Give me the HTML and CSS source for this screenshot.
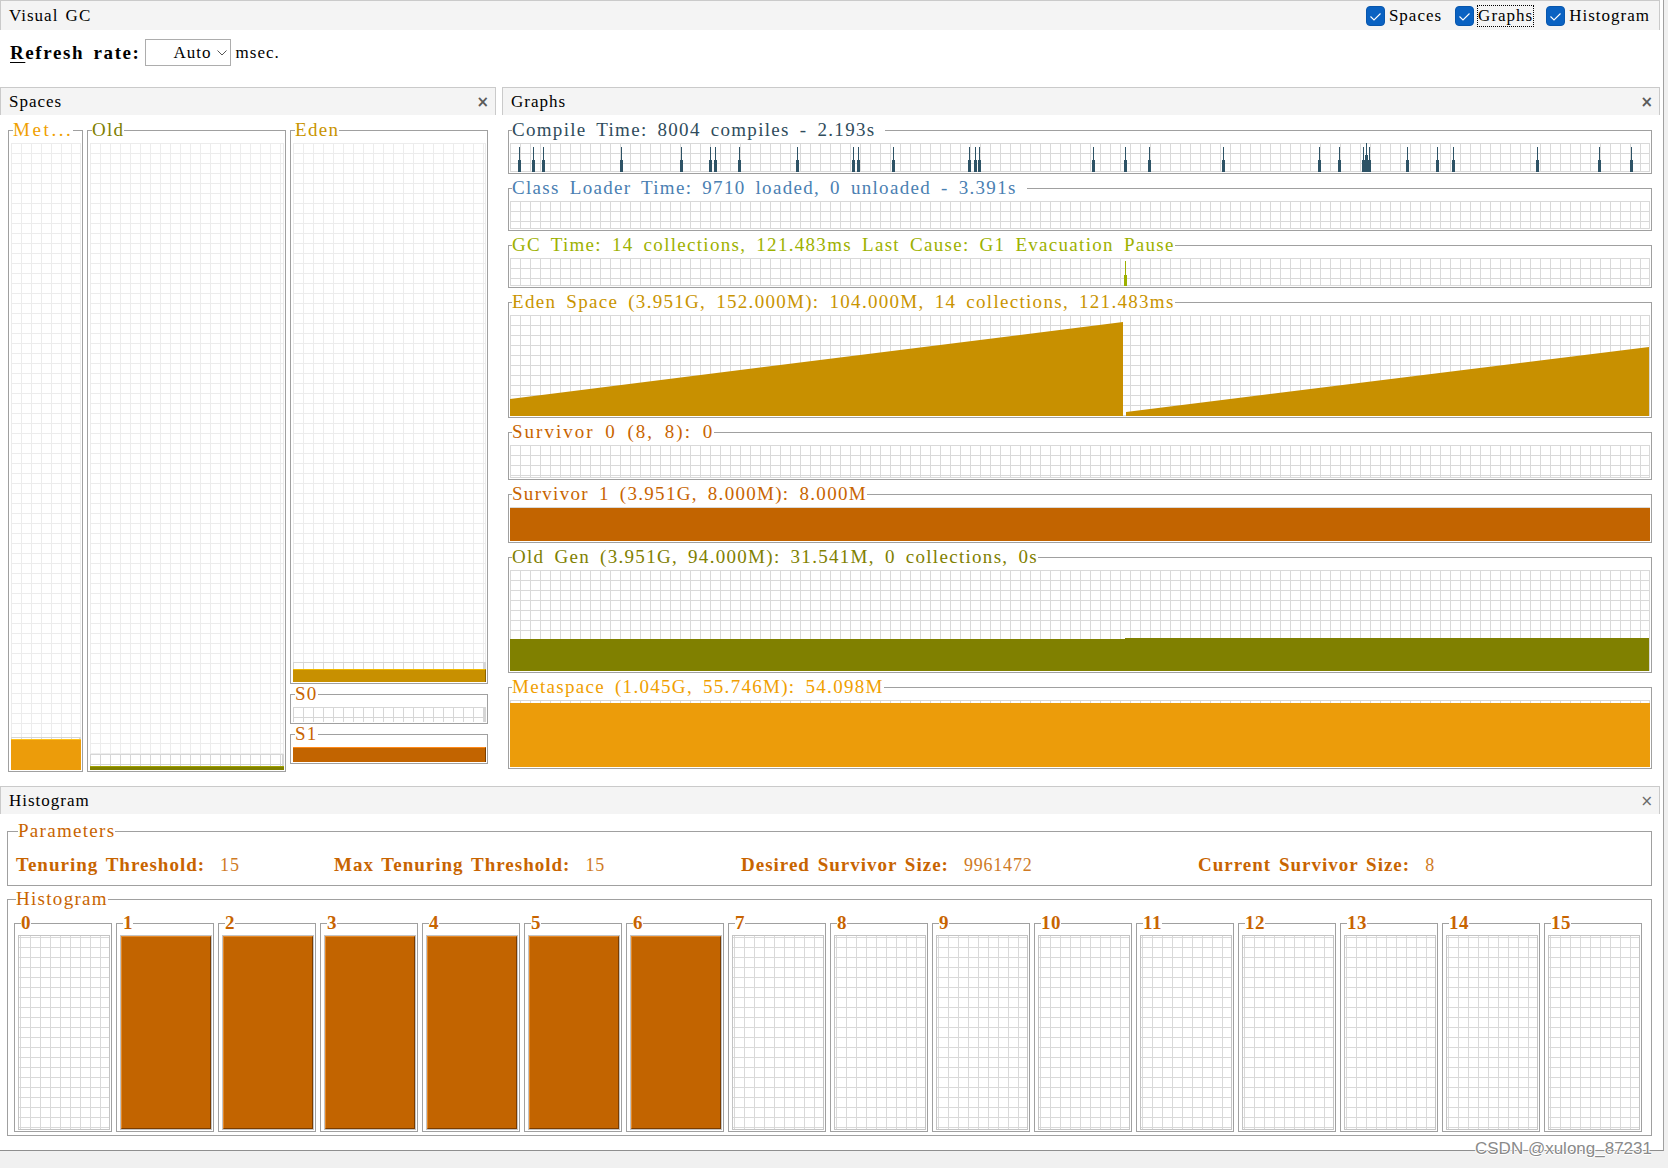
FILE: index.html
```html
<!DOCTYPE html>
<html>
<head>
<meta charset="utf-8">
<title>Visual GC</title>
<link rel="stylesheet" href="styles.css">
</head>
<body>
<div class="page">
  <div class="frame">
    <div class="titlebar">
      <span class="ui">Visual GC</span>
      <div class="checks">
        <span class="chk"><svg class="cb" width="19" height="20" viewBox="0 0 19 20"><rect x="0.5" y="0.5" width="18" height="19" rx="3.5" fill="#0a62c2" stroke="#0857ad"/><path d="M4.5 10.5 L8 14 L14.5 7.5" fill="none" stroke="#fff" stroke-width="1.1"/></svg><span class="ui">Spaces</span></span>
        <span class="chk"><svg class="cb" width="19" height="20" viewBox="0 0 19 20"><rect x="0.5" y="0.5" width="18" height="19" rx="3.5" fill="#0a62c2" stroke="#0857ad"/><path d="M4.5 10.5 L8 14 L14.5 7.5" fill="none" stroke="#fff" stroke-width="1.1"/></svg><span class="ui focus">Graphs</span></span>
        <span class="chk"><svg class="cb" width="19" height="20" viewBox="0 0 19 20"><rect x="0.5" y="0.5" width="18" height="19" rx="3.5" fill="#0a62c2" stroke="#0857ad"/><path d="M4.5 10.5 L8 14 L14.5 7.5" fill="none" stroke="#fff" stroke-width="1.1"/></svg><span class="ui">Histogram</span></span>
      </div>
    </div>

    <div class="refresh">
      <span class="rlabel"><u>R</u>efresh rate:</span>
      <span class="combo"><span class="ui">Auto</span><svg class="chev" width="10" height="6" viewBox="0 0 10 6"><path d="M0.5 0.5 L5 5 L9.5 0.5" fill="none" stroke="#555" stroke-width="1"/></svg></span>
      <span class="ui msec">msec.</span>
    </div>

    <div class="panels">
      <section class="panel spaces">
        <div class="phead"><span class="ui">Spaces</span><span class="close">×</span></div>
        <div class="spaces-body">
          <fieldset class="tb sp sp-met">
            <legend class="c-met dots">Met...</legend>
            <div class="spchart tall">
              <div class="lt"></div>
              <div class="dk" style="height:2px"></div>
              <div class="sbar b-met" style="height:31px"></div>
            </div>
          </fieldset>
          <fieldset class="tb sp sp-old">
            <legend class="c-old">Old</legend>
            <div class="spchart tall">
              <div class="lt"></div>
              <div class="dk" style="height:12px"></div>
              <div class="sbar b-old" style="height:4px"></div>
            </div>
          </fieldset>
          <div class="edencol">
            <fieldset class="tb sp">
              <legend class="c-eden">Eden</legend>
              <div class="spchart eden">
                <div class="lt"></div>
                <div class="dk" style="height:7px"></div>
                <div class="sbar b-eden" style="height:13px"></div>
              </div>
            </fieldset>
            <fieldset class="tb sp s0">
              <legend class="c-surv">S0</legend>
              <div class="spchart small"><div class="dk fill"></div></div>
            </fieldset>
            <fieldset class="tb sp s1">
              <legend class="c-surv">S1</legend>
              <div class="spchart small"><div class="sbar b-surv fill"></div></div>
            </fieldset>
          </div>
        </div>
      </section>

      <section class="panel graphs">
        <div class="phead"><span class="ui">Graphs</span><span class="close">×</span></div>
        <div class="graphs-body">
          <fieldset class="tb gr">
            <legend class="c-compile">Compile Time: 8004 compiles - 2.193s&nbsp;</legend>
            <div class="gchart h29">
              <svg class="plot" viewBox="0 0 1140 29" preserveAspectRatio="none">
                <g fill="#2e5366">
                  <rect x="8" y="17" width="3" height="12"/><rect x="9" y="4" width="1" height="25"/>
                  <rect x="22" y="17" width="3" height="12"/><rect x="23" y="4" width="1" height="25"/>
                  <rect x="32" y="17" width="3" height="12"/><rect x="33" y="4" width="1" height="25"/>
                  <rect x="110" y="17" width="3" height="12"/><rect x="111" y="4" width="1" height="25"/>
                  <rect x="170" y="17" width="3" height="12"/><rect x="171" y="4" width="1" height="25"/>
                  <rect x="199" y="17" width="3" height="12"/><rect x="200" y="4" width="1" height="25"/>
                  <rect x="204" y="17" width="3" height="12"/><rect x="205" y="4" width="1" height="25"/>
                  <rect x="228" y="17" width="3" height="12"/><rect x="229" y="4" width="1" height="25"/>
                  <rect x="286" y="17" width="3" height="12"/><rect x="287" y="4" width="1" height="25"/>
                  <rect x="342" y="17" width="3" height="12"/><rect x="343" y="4" width="1" height="25"/>
                  <rect x="347" y="17" width="3" height="12"/><rect x="348" y="4" width="1" height="25"/>
                  <rect x="382" y="17" width="3" height="12"/><rect x="383" y="4" width="1" height="25"/>
                  <rect x="458" y="17" width="3" height="12"/><rect x="459" y="4" width="1" height="25"/>
                  <rect x="464" y="17" width="3" height="12"/><rect x="465" y="4" width="1" height="25"/>
                  <rect x="468" y="17" width="3" height="12"/><rect x="469" y="4" width="1" height="25"/>
                  <rect x="582" y="17" width="3" height="12"/><rect x="583" y="4" width="1" height="25"/>
                  <rect x="614" y="17" width="3" height="12"/><rect x="615" y="4" width="1" height="25"/>
                  <rect x="638" y="17" width="3" height="12"/><rect x="639" y="4" width="1" height="25"/>
                  <rect x="712" y="17" width="3" height="12"/><rect x="713" y="4" width="1" height="25"/>
                  <rect x="808" y="17" width="3" height="12"/><rect x="809" y="4" width="1" height="25"/>
                  <rect x="828" y="17" width="3" height="12"/><rect x="829" y="4" width="1" height="25"/>
                  <rect x="852" y="17" width="3" height="12"/><rect x="853" y="4" width="1" height="25"/>
                  <rect x="855" y="12" width="3" height="17"/><rect x="856" y="0" width="1" height="29"/>
                  <rect x="858" y="17" width="3" height="12"/><rect x="859" y="4" width="1" height="25"/>
                  <rect x="896" y="17" width="3" height="12"/><rect x="897" y="4" width="1" height="25"/>
                  <rect x="926" y="17" width="3" height="12"/><rect x="927" y="4" width="1" height="25"/>
                  <rect x="942" y="17" width="3" height="12"/><rect x="943" y="4" width="1" height="25"/>
                  <rect x="1026" y="17" width="3" height="12"/><rect x="1027" y="4" width="1" height="25"/>
                  <rect x="1088" y="17" width="3" height="12"/><rect x="1089" y="4" width="1" height="25"/>
                  <rect x="1120" y="17" width="3" height="12"/><rect x="1121" y="4" width="1" height="25"/>
                </g>
              </svg>
            </div>
          </fieldset>
          <fieldset class="tb gr">
            <legend class="c-class">Class Loader Time: 9710 loaded, 0 unloaded - 3.391s&nbsp;</legend>
            <div class="gchart h28"></div>
          </fieldset>
          <fieldset class="tb gr">
            <legend class="c-gc">GC Time: 14 collections, 121.483ms Last Cause: G1 Evacuation Pause</legend>
            <div class="gchart h28">
              <svg class="plot" viewBox="0 0 1140 28" preserveAspectRatio="none">
                <g fill="#9cb000"><rect x="614" y="17" width="3" height="11"/><rect x="615" y="3" width="1" height="25"/></g>
              </svg>
            </div>
          </fieldset>
          <fieldset class="tb gr">
            <legend class="c-eden">Eden Space (3.951G, 152.000M): 104.000M, 14 collections, 121.483ms</legend>
            <div class="gchart h101">
              <svg class="plot" viewBox="0 0 1140 101" preserveAspectRatio="none">
                <path d="M0 101 V84 L613 7 V101 Z M616 101 V97 L1139 32 V101 Z" fill="#c89000"/>
              </svg>
            </div>
          </fieldset>
          <fieldset class="tb gr">
            <legend class="c-surv wide">Survivor 0 (8, 8): 0</legend>
            <div class="gchart h33"></div>
          </fieldset>
          <fieldset class="tb gr">
            <legend class="c-surv">Survivor 1 (3.951G, 8.000M): 8.000M</legend>
            <div class="gchart h34 stack"><div class="gbar g-surv" style="height:33px"></div></div>
          </fieldset>
          <fieldset class="tb gr">
            <legend class="c-old">Old Gen (3.951G, 94.000M): 31.541M, 0 collections, 0s</legend>
            <div class="gchart h101">
              <svg class="plot" viewBox="0 0 1140 101" preserveAspectRatio="none">
                <path d="M0 101 V69 H615 V68 H1139 V101 Z" fill="#808000"/>
              </svg>
            </div>
          </fieldset>
          <fieldset class="tb gr">
            <legend class="c-met">Metaspace (1.045G, 55.746M): 54.098M</legend>
            <div class="gchart h67 stack"><div class="gbar g-met" style="height:64px"></div></div>
          </fieldset>
        </div>
      </section>
    </div>

    <section class="panel hist">
      <div class="phead"><span class="ui">Histogram</span><span class="close light">×</span></div>
      <div class="hist-body">
        <fieldset class="tb params">
          <legend class="c-surv">Parameters</legend>
          <div class="prow">
            <div class="pg"><span class="pl">Tenuring Threshold:</span><span class="pv">15</span></div>
            <div class="pg"><span class="pl">Max Tenuring Threshold:</span><span class="pv">15</span></div>
            <div class="pg"><span class="pl">Desired Survivor Size:</span><span class="pv">9961472</span></div>
            <div class="pg"><span class="pl">Current Survivor Size:</span><span class="pv">8</span></div>
          </div>
        </fieldset>
        <fieldset class="tb histo">
          <legend class="c-surv">Histogram</legend>
          <div class="cells">
            <fieldset class="tb cell"><legend>0</legend><div class="cchart"></div></fieldset>
            <fieldset class="tb cell"><legend>1</legend><div class="cchart"><div class="cbar"></div></div></fieldset>
            <fieldset class="tb cell"><legend>2</legend><div class="cchart"><div class="cbar"></div></div></fieldset>
            <fieldset class="tb cell"><legend>3</legend><div class="cchart"><div class="cbar"></div></div></fieldset>
            <fieldset class="tb cell"><legend>4</legend><div class="cchart"><div class="cbar"></div></div></fieldset>
            <fieldset class="tb cell"><legend>5</legend><div class="cchart"><div class="cbar"></div></div></fieldset>
            <fieldset class="tb cell"><legend>6</legend><div class="cchart"><div class="cbar"></div></div></fieldset>
            <fieldset class="tb cell"><legend>7</legend><div class="cchart"></div></fieldset>
            <fieldset class="tb cell"><legend>8</legend><div class="cchart"></div></fieldset>
            <fieldset class="tb cell"><legend>9</legend><div class="cchart"></div></fieldset>
            <fieldset class="tb cell"><legend>10</legend><div class="cchart"></div></fieldset>
            <fieldset class="tb cell"><legend>11</legend><div class="cchart"></div></fieldset>
            <fieldset class="tb cell"><legend>12</legend><div class="cchart"></div></fieldset>
            <fieldset class="tb cell"><legend>13</legend><div class="cchart"></div></fieldset>
            <fieldset class="tb cell"><legend>14</legend><div class="cchart"></div></fieldset>
            <fieldset class="tb cell"><legend>15</legend><div class="cchart"></div></fieldset>
          </div>
        </fieldset>
      </div>
    </section>
  </div>
  <div class="watermark">CSDN @xulong_87231</div>
</div>
</body>
</html>
```

FILE: styles.css
```css
* { box-sizing: border-box; }
html, body { margin: 0; padding: 0; }
body {
  background: #f0f0f0;
  width: 1668px;
  height: 1168px;
  overflow: hidden;
  font-family: "Liberation Serif", "Noto Sans CJK SC", serif;
  color: #000;
}
.page { position: relative; width: 1668px; height: 1168px; }
.frame {
  width: 1664px;
  height: 1151px;
  background: #fff;
  border-right: 1px solid #a0a0a0;
  border-bottom: 1px solid #8e8e8e;
  display: flex;
  flex-direction: column;
}
.ui { font-size: 17px; letter-spacing: 1px; word-spacing: 2px; line-height: 20px; white-space: nowrap; }

/* title bar */
.titlebar {
  width: 1660px;
  height: 30px;
  flex: none;
  background: #f4f4f4;
  border: 1px solid #cacaca;
  border-bottom: 0;
  display: flex;
  align-items: center;
  justify-content: space-between;
  padding: 0 9px 0 8px;
}
.checks { display: flex; align-items: center; gap: 13px; }
.chk { display: flex; align-items: center; gap: 4px; }
.cb { display: block; }
.focus { outline: 1px dotted #000; outline-offset: 0; }

/* refresh row */
.refresh {
  height: 57px;
  flex: none;
  display: flex;
  align-items: center;
  padding: 0 0 12px 10px;
}
.rlabel { font-size: 19px; font-weight: bold; letter-spacing: 1.6px; word-spacing: 3px; line-height: 20px; white-space: nowrap; }
.rlabel u { text-decoration-thickness: 1px; text-underline-offset: 3px; }
.combo {
  margin-left: 4px;
  width: 86px;
  height: 27px;
  border: 1px solid #adadad;
  background: #fff;
  display: flex;
  align-items: center;
  justify-content: flex-end;
  gap: 5px;
  padding-right: 3px;
}
.chev { display: block; }
.msec { margin-left: 5px; }

/* panels */
.panels { height: 699px; flex: none; display: flex; gap: 6px; }
.panel { display: flex; flex-direction: column; }
.spaces { width: 496px; }
.graphs { width: 1158px; }
.hist { width: 1660px; flex: 1; }
.phead {
  height: 28px;
  flex: none;
  background: #f4f4f4;
  border: 1px solid #cacaca;
  border-bottom: 0;
  display: flex;
  align-items: center;
  justify-content: space-between;
  padding: 0 6px 0 8px;
}
.close { font-family: "DejaVu Sans", sans-serif; font-size: 15px; font-weight: bold; color: #5a5a5a; line-height: 16px; }
.close.light { font-weight: normal; color: #6a6a6a; }

/* titled borders */
fieldset.tb {
  margin: 0;
  min-width: 0;
  border: 1px solid #a0a0a0;
  padding: 3px 1px 1px 2px;
}
fieldset.tb > legend {
  padding: 0;
  margin-left: 2px;
  font-size: 19px;
  line-height: 20px;
  height: 20px;
  letter-spacing: 1.3px;
  word-spacing: 4px;
  white-space: nowrap;
}
fieldset.tb > legend.dots { letter-spacing: 2.6px; }
fieldset.tb > legend.wide { letter-spacing: 2px; }
.c-met { color: #f0a000; }
.c-old { color: #808000; }
.c-eden { color: #c99400; }
.c-surv { color: #c86400; }
.c-compile { color: #2f4c5c; }
.c-class { color: #4a80b2; }
.c-gc { color: #9db100; }

/* spaces */
.spaces-body { display: flex; gap: 4px; padding: 5px 8px 0 8px; align-items: flex-start; }
.sp-met { width: 75px; }
.sp-old { width: 199px; }
.edencol { width: 198px; display: flex; flex-direction: column; }
.s0 { margin-top: 4px; padding-top: 2px; }
.s1 { margin-top: 3px; padding-top: 4px; }
.spchart { display: flex; flex-direction: column; }
.spchart.tall { height: 627px; }
.spchart.eden { height: 539px; }
.spchart.small { height: 15px; }
.lt {
  flex: 1;
  background-color: #fff;
  background-image: linear-gradient(90deg, #ececec 1px, transparent 1px), linear-gradient(180deg, #ececec 1px, transparent 1px);
  background-size: 10px 10px;
  box-shadow: inset -1px 0 #ececec;
}
.dk {
  flex: none;
  background-color: #fff;
  background-image: linear-gradient(90deg, #d6d6d6 1px, transparent 1px), linear-gradient(180deg, #d6d6d6 1px, transparent 1px);
  background-size: 10px 10px;
  box-shadow: inset -2px 0 #d6d6d6;
}
.sbar { flex: none; }
.spchart .fill { flex: 1 1 auto; }
.b-met { background: #ec9c0a; border-top: 1px solid #ffc21a; }
.b-old { background: #808000; border-top: 1px solid #a0a000; }
.b-eden { background: #c89000; border-top: 1px solid #f0b800; border-right: 1px solid #8c6400; }
.b-surv { background: #c26400; border-top: 1px solid #ff8a1a; border-right: 1px solid #7a3e00; }

/* graphs */
.graphs-body { display: flex; flex-direction: column; gap: 4px; padding: 5px 8px 0 6px; }
fieldset.gr { width: 1144px; padding: 3px 1px 1px 1px; }
.gchart {
  background-color: #fff;
  background-image: linear-gradient(90deg, #d9d9d9 1px, transparent 1px), linear-gradient(180deg, #d9d9d9 1px, transparent 1px);
  background-size: 10px 10px;
  box-shadow: inset -1px -1px #d9d9d9;
}
.gchart.stack { display: flex; flex-direction: column; justify-content: flex-end; }
.h28 { height: 28px; }
.h29 { height: 29px; }
.h33 { height: 33px; }
.h34 { height: 34px; }
.h67 { height: 67px; }
.h101 { height: 101px; }
.plot { display: block; width: 100%; height: 100%; }
.gbar { flex: none; }
.g-surv { background: #c26400; }
.g-met { background: #ec9c0a; }

/* histogram */
.hist-body { padding: 7px 8px 0 7px; display: flex; flex-direction: column; }
fieldset.params { width: 1645px; padding: 14px 8px 10px 8px; }
.prow { display: grid; grid-template-columns: 318px 407px 457px auto; height: 20px; }
.pg { display: flex; gap: 15px; align-items: center; color: #c86400; white-space: nowrap; }
.pl { font-size: 19px; font-weight: bold; letter-spacing: 1px; word-spacing: 2px; line-height: 20px; }
.pv { font-size: 18px; letter-spacing: 0.8px; line-height: 20px; color: #cf7a24; }
fieldset.histo { width: 1645px; margin-top: 3px; padding: 4px 9px 3px 6px; }
.cells { display: grid; grid-template-columns: repeat(16, 1fr); gap: 4px; }
fieldset.cell { padding: 2px 1px 1px 3px; }
fieldset.cell > legend { margin-left: 3px; color: #c86400; font-weight: bold; letter-spacing: 0.5px; }
.cchart {
  height: 195px;
  display: flex;
  border: 1px solid #c4c4c4;
  background-color: #fff;
  background-image: linear-gradient(90deg, #d9d9d9 1px, transparent 1px), linear-gradient(180deg, #d9d9d9 1px, transparent 1px);
  background-size: 10px 10px;
  background-position: 1px 1px;
}
.cbar {
  flex: 1;
  background: #c26400;
  border-left: 1px solid #e58a2a;
  border-top: 1px solid #e58a2a;
  border-right: 1px solid #7a3c00;
  border-bottom: 1px solid #7a3c00;
}

/* watermark overlay */
.watermark {
  position: absolute;
  left: 1475px;
  top: 1139px;
  font-family: "Liberation Sans", Arial, sans-serif;
  font-size: 17px;
  line-height: 20px;
  color: #8a8a8a;
  text-shadow: 1px 0 #fff, -1px 0 #fff, 0 1px #fff, 0 -1px #fff;
  white-space: nowrap;
}
```
